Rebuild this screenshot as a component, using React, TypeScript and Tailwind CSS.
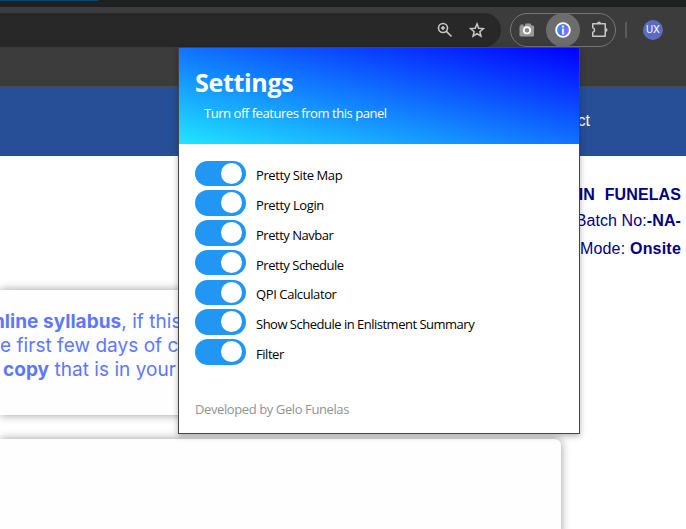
import React from "react";

type Feature = { name: string; spacing: string };

const features: Feature[] = [
  { name: "Pretty Site Map", spacing: "tracking-[-0.4px]" },
  { name: "Pretty Login", spacing: "tracking-[-0.38px]" },
  { name: "Pretty Navbar", spacing: "tracking-[-0.48px]" },
  { name: "Pretty Schedule", spacing: "tracking-[-0.47px]" },
  { name: "QPI Calculator", spacing: "tracking-[-0.4px]" },
  { name: "Show Schedule in Enlistment Summary", spacing: "tracking-[-0.5px]" },
  { name: "Filter", spacing: "tracking-[-0.45px]" },
];

function FeatureRow({ name, spacing }: Feature) {
  return (
    <li className="flex h-[29.75px] items-start">
      <span className="flex h-[25.5px] w-[51px] shrink-0 justify-end rounded-full bg-[#2196f3] pt-[2px] pr-1">
        <span className="size-[21px] rounded-full bg-white" />
      </span>
      <span className={`ml-[10px] pt-[5.7px] text-[13px] leading-[18px] whitespace-nowrap text-black ${spacing}`}>
        {name}
      </span>
    </li>
  );
}

function Popup() {
  return (
    <section className="absolute top-[47px] left-[178px] flex h-[387px] w-[402px] flex-col border border-[#454547] bg-white font-['Open_Sans','Noto_Sans',sans-serif] shadow-[0_2px_6px_rgba(0,0,0,0.3)]">
      <header className="h-24 shrink-0 bg-[linear-gradient(to_top_right,#20e6ff,#0000ff)] px-4 text-white">
        <h1 className="pt-[18px] text-[25px] leading-8 font-bold tracking-[-0.3px]">Settings</h1>
        <p className="pt-[6px] pl-[9px] text-[13px] leading-[18px] tracking-[-0.45px]">Turn off features from this panel</p>
      </header>
      <ul className="px-4 pt-[16.7px]">
        {features.map((f) => (
          <FeatureRow key={f.name} {...f} />
        ))}
      </ul>
      <footer className="px-4 pt-[31.3px] text-[13px] leading-[18px] tracking-[-0.4px] text-[#929292]">
        Developed by Gelo Funelas
      </footer>
    </section>
  );
}

function BrowserBar() {
  return (
    <div className="bg-[#3c3c3c]">
      <div className="h-[7px] bg-[#1f2121]">
        <div className="h-px w-[98px] bg-[#004a77]" />
      </div>
      <div className="flex h-[46px] items-start pt-[6px]">
        <div className="flex h-[34px] w-[501px] items-center justify-end rounded-r-full bg-[#282828] pr-4">
          <svg width="16" height="16" viewBox="0 0 16 16" fill="none" stroke="#c7c7c7" strokeWidth="1.6" className="mr-4">
            <circle cx="6" cy="6" r="4.5" />
            <path d="M9.4 9.4 14.5 14.5M6 4v4M4 6h4" />
          </svg>
          <svg width="16" height="16" viewBox="0 0 16 16" fill="none" stroke="#c7c7c7" strokeWidth="1.5">
            <path d="m8 1.900 1.750 4.300 4.700.4-3.600 3.050 1.100 4.550L8 11.700l-3.950 2.500 1.100-4.550L1.550 6.600l4.700-.4z" />
          </svg>
        </div>
        <div className="ml-[9px] flex h-[34px] w-[106px] items-center rounded-full border border-[#757575]">
          <svg width="16" height="16" viewBox="0 0 16 16" className="ml-2">
            <path d="M1.500 4V2.500h3V4h1l1-2.500h5l1 2h1.500q1 0 1 1v9q0 1-1 1h-12q-1.500 0-1.500-1V5q0-1 1-1z" fill="#999" />
            <circle cx="8" cy="8.300" r="3.200" fill="#888" stroke="#fff" strokeWidth="1.700" />
          </svg>
          <span className="ml-[11px] flex size-[34px] shrink-0 items-center justify-center rounded-full bg-[#6d6d6d]">
            <svg width="18" height="18" viewBox="0 0 18 18">
              <defs>
                <linearGradient id="info" x1="0" y1="0" x2="1" y2="0.3">
                  <stop offset="0" stopColor="#35b8ff" />
                  <stop offset="0.55" stopColor="#5265ff" />
                  <stop offset="1" stopColor="#8b7bff" />
                </linearGradient>
              </defs>
              <circle cx="9" cy="9" r="6.900" fill="url(#info)" stroke="#fff" strokeWidth="1.800" />
              <path d="M9 4.500v2M9 7.500v6" stroke="#ece8ff" strokeWidth="2.300" />
            </svg>
          </span>
          <svg width="18" height="18" viewBox="0 0 18 18" fill="none" stroke="#c7c7c7" strokeWidth="1.500" className="ml-[11px] shrink-0">
            <path d="M1.750 2.750h12.500v12.500H1.750v-3.900a2.300 2.300 0 0 0 0-4.500z" strokeLinejoin="round" />
            <path d="M6 2.500a2 2 0 0 1 4 0zM14.500 7a2 2 0 0 1 0 4z" fill="#c7c7c7" stroke="none" />
          </svg>
        </div>
        <div className="mt-[9px] ml-[9px] h-4 w-[2px] bg-[#5a5a5a]" />
        <div className="mt-[7px] ml-4 flex size-5 items-center justify-center rounded-full bg-[#5c6bc0] font-[Roboto,sans-serif] text-[11px] leading-5 text-[#f0f2ff]">
          UX
        </div>
      </div>
      <div className="h-[34px] border-b border-[#494949]" />
    </div>
  );
}

const cardShadow = "bg-[#fefefe] shadow-[0_0_10px_rgba(0,0,0,0.4)]";

export default function App() {
  return (
    <main className="relative h-[529px] w-[686px] overflow-hidden bg-white">
      <BrowserBar />
      <nav className="flex h-[69px] justify-end bg-[#274f97] pt-[22px] pr-24 font-['Liberation_Sans',Arial,sans-serif] text-base leading-6 text-white">
        Contact
      </nav>
      <div className="flex h-[134px] flex-col items-end pt-[25px] pr-[5px] font-['Liberation_Sans',Arial,sans-serif] text-base text-[#000080]">
        <strong className="leading-[27px] tracking-[0.1px] whitespace-pre [word-spacing:0.4px]">IN  FUNELAS</strong>
        <div className="leading-[26px] tracking-[0.1px]">Batch No:<strong>-NA-</strong></div>
        <div className="leading-[30px] tracking-[0.2px]">Mode: <strong>Onsite</strong></div>
      </div>
      <div className={`h-[125px] w-[561px] rounded-r-md pt-5 font-[Inter,sans-serif] text-[19px] leading-6 tracking-[0.04px] whitespace-nowrap text-[#5c78ff] ${cardShadow}`}>
        <p className="-ml-[7px]"><strong>nline syllabus</strong>, if this</p>
        <p>e first few days of class</p>
        <p className="pl-[3px]"><strong>copy</strong> that is in your</p>
      </div>
      <div className={`mt-6 h-[100px] w-[561px] rounded-r-md ${cardShadow}`} />
      <Popup />
    </main>
  );
}
